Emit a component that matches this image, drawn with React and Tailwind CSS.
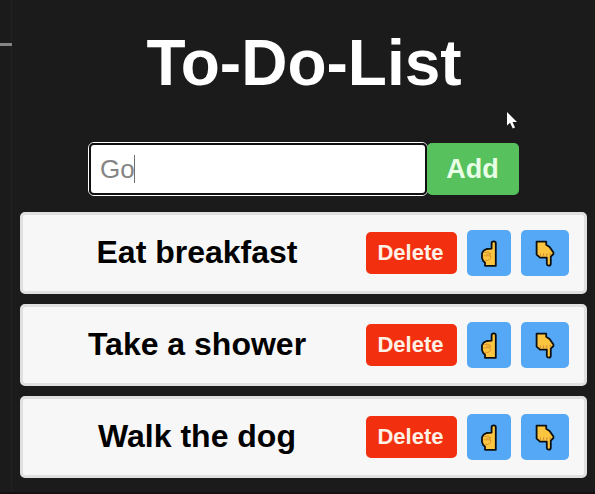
const tasks = ['Eat breakfast', 'Take a shower', 'Walk the dog'];

function HandUp() {
  return (
    <svg width="18" height="28" viewBox="0 0 18 28" className="block">
      <path
        d="M15.8 25.8 H5 V22.6 L3.2 21 L2 18 V13.2 L3.6 10.6 L6.6 9 L11.6 8.6 V3.4 C11.6 0.8 15.8 0.8 15.8 3.4 Z"
        fill="#fbc540"
        stroke="#0c1014"
        strokeWidth="1.8"
        strokeLinejoin="round"
      />
      <path d="M4 12.8 L8 12 L11 14.2 H6 M3.6 15.8 H10.6 V18.6 L8 20.4 H5" fill="none" stroke="#d08a2c" strokeWidth="0.8" />
    </svg>
  );
}

function HandDown() {
  return (
    <svg width="20" height="28" viewBox="0 0 20 28" className="block">
      <path
        d="M1.6 1.6 H11.2 V4.8 L14.6 7 L18.4 12.4 V14 L15.8 16.6 V23.4 C15.8 26.4 11.8 26.4 11.8 23.4 V17.6 H5 L1.6 14.6 Z"
        fill="#fbc540"
        stroke="#0c1014"
        strokeWidth="1.8"
        strokeLinejoin="round"
      />
      <path d="M5.4 13.4 V16.4 M8.6 13.4 V16.4 M11.8 13.4 V17 M15.2 12.8 V15.8" fill="none" stroke="#c98230" strokeWidth="0.9" />
    </svg>
  );
}

function Task({ text }) {
  return (
    <li className="flex h-[82px] items-center rounded-[5px] border-[3px] border-[#e1e0e0] bg-[#f7f7f7] pr-[15px] pl-[10px]">
      <span className="mr-[5px] flex-1 pb-[2px] text-center text-[32px] leading-[40px] font-bold text-black">{text}</span>
      <button className="h-[42px] w-[91px] rounded-[5px] bg-[#f2300f] pr-[2px] text-[22px] leading-[42px] font-bold text-[#fff1e6]">
        Delete
      </button>
      <button className="ml-[10px] flex h-[46px] w-[44px] items-center justify-center rounded-[5px] bg-[#54a8f5] pt-px">
        <HandUp />
      </button>
      <button className="ml-[10px] flex h-[46px] w-[48px] items-center justify-center rounded-[5px] bg-[#54a8f5] pt-[2px]">
        <HandDown />
      </button>
    </li>
  );
}

export default function App() {
  return (
    <div className="relative h-[494px] w-[595px] overflow-hidden bg-[#1b1b1b] font-['Liberation_Sans',Arial,sans-serif]">
      <div className="absolute top-0 left-[11px] h-[494px] w-px bg-[#222222]" />
      <div className="absolute top-[43px] left-0 h-[3px] w-[12px] bg-[#858585]" />
      <main className="flex flex-col pt-[26px] pr-[8px] pl-[20px]">
        <h1 className="pl-px text-center text-[64px] leading-[74px] font-bold text-white">To-Do-List</h1>
        <div className="mt-[42px] flex h-[54px] items-center justify-center">
          <div className="flex h-[54px] w-[340px] rounded-[6px] border border-white">
            <div className="flex flex-1 items-center rounded-[5px] border-2 border-[#101010] bg-white pl-[9px] text-[26px] leading-[30px] text-[#858585]">
              <span>Go</span>
              <span className="-ml-px h-[28px] w-px bg-[#707070]" />
            </div>
          </div>
          <button className="-ml-px h-[52px] w-[92px] rounded-[5px] bg-[#57c15e] pr-px text-[27px] leading-[52px] font-bold text-[#e8ffe6]">
            Add
          </button>
        </div>
        <ul className="mt-[16px] flex flex-col gap-[10px]">
          {tasks.map((text) => (
            <Task key={text} text={text} />
          ))}
        </ul>
      </main>
      <div className="absolute bottom-0 left-0 h-[2px] w-full bg-[#160f11]" />
      <svg className="absolute top-[111px] left-[506px]" width="13" height="19" viewBox="0 0 13 19">
        <path d="M1 1 V14.5 L4 11.8 L6.8 17.4 L9 16.4 L6.5 11 H11 Z" fill="#ffffff" />
      </svg>
    </div>
  );
}
